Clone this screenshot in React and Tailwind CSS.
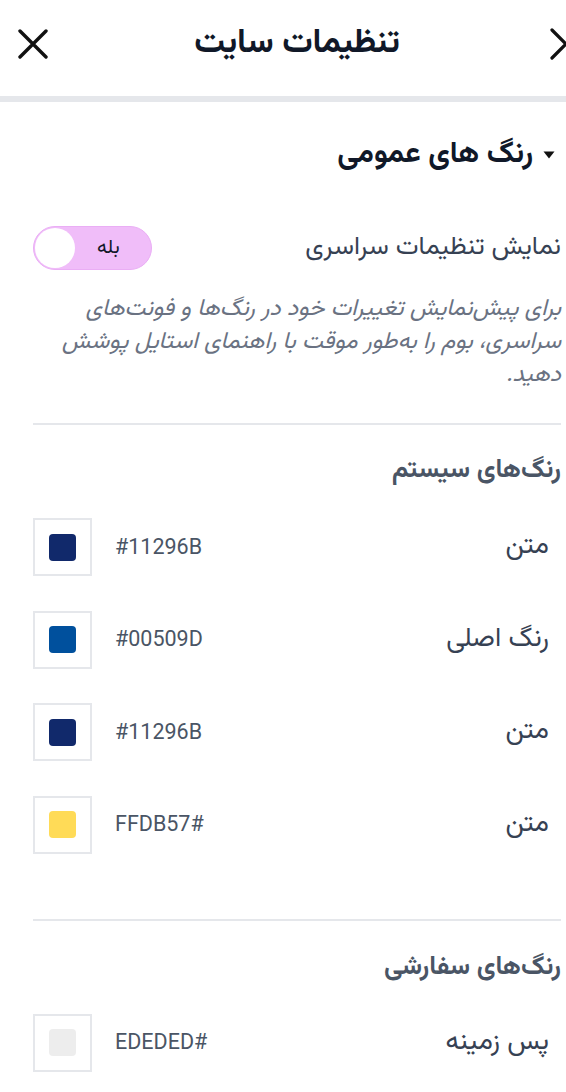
import React from 'react';

const systemColors = [
  { label: 'متن', hex: '#11296B', color: '#11296B' },
  { label: 'رنگ اصلی', hex: '#00509D', color: '#00509D' },
  { label: 'متن', hex: '#11296B', color: '#11296B' },
  { label: 'متن', hex: 'FFDB57#', color: '#FFDB57' },
];

const customColors = [{ label: 'پس زمینه', hex: 'EDEDED#', color: '#EDEDED' }];

const fa = { fontFamily: '"Vazirmatn", "Noto Sans Arabic", "DejaVu Sans", sans-serif' };

const ColorRow = ({ label, hex, color }) => (
  <div className="flex items-center justify-between h-[58px] pr-[12px]">
    <span className="text-[27px] leading-[40px] text-gray-700" style={fa}>{label}</span>
    <div className="flex items-center flex-row-reverse gap-[23px]" dir="ltr">
      <span className="text-[21.5px] text-gray-600" style={{ fontFamily: 'Roboto, sans-serif' }}>{hex}</span>
      <div className="w-[59px] h-[58px] border-2 border-gray-200 flex items-center justify-center">
        <div className="w-[27px] h-[27px] rounded-[4px]" style={{ backgroundColor: color }} />
      </div>
    </div>
  </div>
);

export default function App() {
  return (
    <div className="w-[566px] min-h-[1092px] overflow-hidden bg-white">
      <div dir="rtl" className="w-[594px]" style={fa}>
        {/* header */}
        <div className="h-[96px] flex items-center justify-between px-[16px] pb-[8px]">
          <svg width="32" height="32" viewBox="0 0 32 32" fill="none" stroke="#111" strokeWidth="3.2" strokeLinecap="round" strokeLinejoin="round">
            <path d="M6 2 L20 16 L6 30" />
          </svg>
          <h1 className="text-[34px] leading-[44px] font-bold text-gray-900">تنظیمات سایت</h1>
          <svg width="32" height="32" viewBox="0 0 32 32" fill="none" stroke="#111" strokeWidth="3.4" strokeLinecap="round">
            <path d="M4 3 L30 29 M30 3 L4 29" />
          </svg>
        </div>
        <div className="h-[6px] bg-gray-200" />

        <div className="px-[33px]">
          <div className="flex items-center gap-[10px] h-[52px] mt-[27px] pr-[6px]">
            <svg width="12" height="8" viewBox="0 0 12 8">
              <path d="M0.5 0.5 L11.5 0.5 L6 7.5 Z" fill="#111" />
            </svg>
            <h2 className="text-[30px] leading-[44px] font-bold text-gray-900">رنگ های عمومی</h2>
          </div>

          <div className="flex items-center justify-between h-[44px] mt-[45px]">
            <span className="text-[26px] leading-[44px] text-gray-700">نمایش تنظیمات سراسری</span>
            <div dir="ltr" className="w-[119px] h-[44px] rounded-full bg-[#f0bdf9] border border-[#eaaef5] flex items-center px-[1px]">
              <div className="w-[40px] h-[40px] rounded-full bg-white" />
              <span className="ml-[22px] text-[20px] leading-[30px] text-gray-900" style={fa}>بله</span>
            </div>
          </div>

          <p className="mt-[23px] text-[23.5px] leading-[33px] italic text-gray-500">
            برای پیش‌نمایش تغییرات خود در رنگ‌ها و فونت‌های سراسری، بوم را به‌طور موقت با راهنمای استایل پوشش دهید.
          </p>

          <div className="h-[2px] bg-gray-200 mt-[31px]" />

          <h3 className="mt-[26px] text-[26px] leading-[40px] font-bold text-gray-600">رنگ‌های سیستم</h3>
          <div className="mt-[27px] flex flex-col gap-[34.5px]">
            {systemColors.map((c, i) => (
              <ColorRow key={i} {...c} />
            ))}
          </div>

          <div className="h-[2px] bg-gray-200 mt-[65px]" />

          <h3 className="mt-[27px] text-[26px] leading-[40px] font-bold text-gray-600">رنگ‌های سفارشی</h3>
          <div className="mt-[26px] flex flex-col gap-[34px]">
            {customColors.map((c, i) => (
              <ColorRow key={i} {...c} />
            ))}
          </div>
        </div>
      </div>
    </div>
  );
}
